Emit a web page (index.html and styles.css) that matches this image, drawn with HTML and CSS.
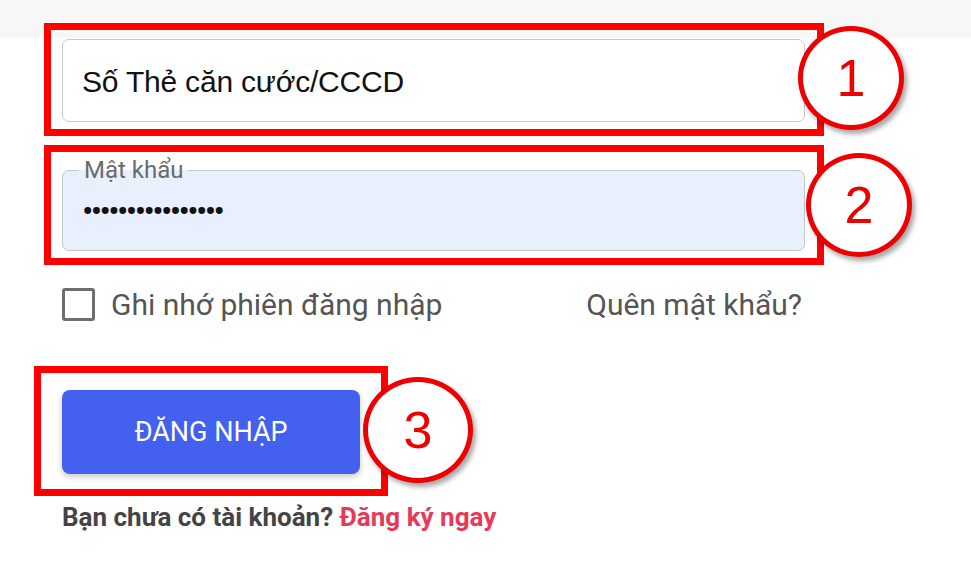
FILE: index.html
```html
<!DOCTYPE html>
<html lang="vi">
<head>
<meta charset="utf-8">
<title>Đăng nhập</title>
<link rel="stylesheet" href="styles.css">
</head>
<body>
<div class="topbar"></div>
<form class="login">
  <div class="mark mark-1">
    <div class="field-plain">Số Thẻ căn cước/CCCD</div>
    <span class="badge badge-1">1</span>
  </div>
  <div class="mark mark-2">
    <fieldset class="field-outlined">
      <legend>Mật khẩu</legend>
      <div class="dots">••••••••••••••••</div>
    </fieldset>
    <span class="badge badge-2">2</span>
  </div>
  <div class="options">
    <label class="remember"><span class="checkbox"></span>Ghi nhớ phiên đăng nhập</label>
    <a class="forgot">Quên mật khẩu?</a>
  </div>
  <div class="mark mark-3">
    <button type="button" class="btn-login">ĐĂNG NHẬP</button>
    <span class="badge badge-3">3</span>
  </div>
  <p class="signup">Bạn chưa có tài khoản? <a class="signup-link">Đăng ký ngay</a></p>
</form>
</body>
</html>
```

FILE: styles.css
```css
* { box-sizing: border-box; }
html, body { margin: 0; padding: 0; }
body {
  width: 971px;
  height: 566px;
  overflow: hidden;
  background: #ffffff;
  font-family: Roboto, "Noto Sans", sans-serif;
  position: relative;
}
.topbar {
  position: absolute;
  left: 0; top: 0; right: 0;
  height: 38px;
  background: #f7f7f7;
}
.login {
  position: relative;
  padding: 23px 0 0 44px;
  width: 830px;
}
.mark {
  position: relative;
  border: 7px solid #ff0000;
}
.mark-1 {
  width: 780px;
  padding: 9px 12px 7px 11px;
}
.mark-2 {
  width: 780px;
  margin-top: 9px;
  padding: 6px 12px 7px 11px;
}
.field-plain {
  height: 83px;
  border: 1.5px solid #c8c8c8;
  border-radius: 7px;
  background: #fff;
  display: flex;
  align-items: center;
  padding-left: 19px;
  padding-top: 2px;
  font-family: "Liberation Sans", Arial, sans-serif;
  font-size: 30px;
  letter-spacing: -0.2px;
  color: #111;
}
.field-outlined {
  margin: 0;
  height: 93px;
  border: 1.5px solid #c2c6cc;
  border-radius: 7px;
  background: #e8f0fe;
  padding: 0 0 0 16px;
}
.field-outlined legend {
  padding: 0 5px;
  font-size: 24px;
  line-height: 24px;
  color: #6b6b6b;
}
.dots {
  padding: 14px 0 0 3px;
  font-size: 34px;
  line-height: 30px;
  color: #111;
  letter-spacing: -2.7px;
}
.badge {
  position: absolute;
  width: 106px;
  height: 104px;
  border: 5px solid #ee0000;
  border-radius: 50%;
  background: #fff;
  color: #ee0000;
  font-family: "Liberation Sans", Arial, sans-serif;
  font-size: 52px;
  line-height: 94px;
  text-align: center;
  box-shadow: 3px 4px 5px rgba(0, 0, 0, 0.35);
}
.badge-1 { left: 747px; top: -4px; }
.badge-2 { left: 755px; top: 1px; }
.badge-3 { left: 322px; top: 4px; width: 110px; height: 106px; line-height: 96px; }
.options {
  width: 743px;
  margin: 22px 0 0 18px;
  display: flex;
  justify-content: space-between;
  align-items: center;
  font-size: 30px;
  color: #555;
}
.remember {
  display: flex;
  align-items: center;
  gap: 16px;
}
.checkbox {
  width: 33px;
  height: 33px;
  border: 3.5px solid #6e6e6e;
  border-radius: 3px;
}
.forgot { color: #555; margin-right: 3px; }
.mark-3 {
  width: 354px;
  margin: 44px 0 0 -10px;
  padding: 17px 21px 15px 21px;
}
.btn-login {
  display: block;
  width: 298px;
  height: 84px;
  border: 0;
  border-radius: 8px;
  background: #4361ee;
  color: #fff;
  font-family: Roboto, sans-serif;
  font-size: 27px;
  font-weight: 400;
  box-shadow: 0 3px 6px rgba(0, 0, 0, 0.22);
}
.signup {
  margin: 6px 0 0 18px;
  font-size: 26px;
  line-height: 30px;
  font-weight: 700;
  color: #444;
}
.signup-link { color: #e8395a; }
```
